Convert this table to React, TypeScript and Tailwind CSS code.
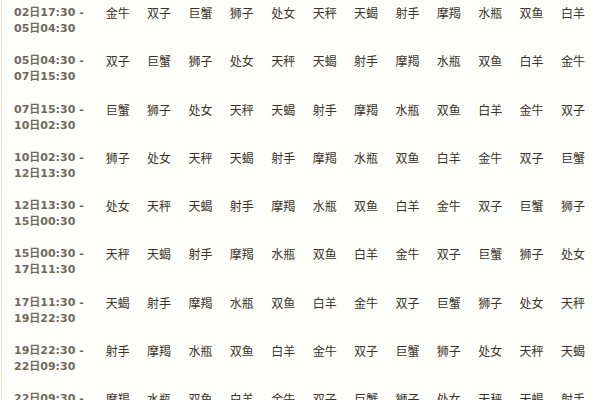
const SIGNS = ["白羊", "金牛", "双子", "巨蟹", "狮子", "处女", "天秤", "天蝎", "射手", "摩羯", "水瓶", "双鱼"];

const RANGES = [
  ["02日17:30", "05日04:30"],
  ["05日04:30", "07日15:30"],
  ["07日15:30", "10日02:30"],
  ["10日02:30", "12日13:30"],
  ["12日13:30", "15日00:30"],
  ["15日00:30", "17日11:30"],
  ["17日11:30", "19日22:30"],
  ["19日22:30", "22日09:30"],
  ["22日09:30", "24日20:30"],
];

function Row({ from, to, start }: { from: string; to: string; start: number }) {
  const signs = Array.from({ length: 12 }, (_, i) => SIGNS[(start + i) % 12]);
  return (
    <div className="grid h-[48.3px] shrink-0 grid-cols-[95px_repeat(12,41.4px)] pt-[5px] leading-4">
      <div className="pl-3 font-['DejaVu_Sans','Noto_Sans_CJK_SC',sans-serif] text-[11px] font-bold text-[#6e6a5a]">
        <div>{from} -</div>
        <div>{to}</div>
      </div>
      {signs.map((s, i) => (
        <div key={i} className="text-center font-['Noto_Sans_CJK_SC',sans-serif] text-[12px] text-[#38342a]">
          {s}
        </div>
      ))}
    </div>
  );
}

export default function App() {
  return (
    <div className="h-[400px] w-[600px] overflow-hidden bg-[#fffffc]">
      <div className="ml-[1px] flex h-full flex-col border-l border-[#e2e2dc]">
        {RANGES.map(([a, b], i) => (
          <Row key={i} from={a} to={b} start={1 + i} />
        ))}
      </div>
    </div>
  );
}
